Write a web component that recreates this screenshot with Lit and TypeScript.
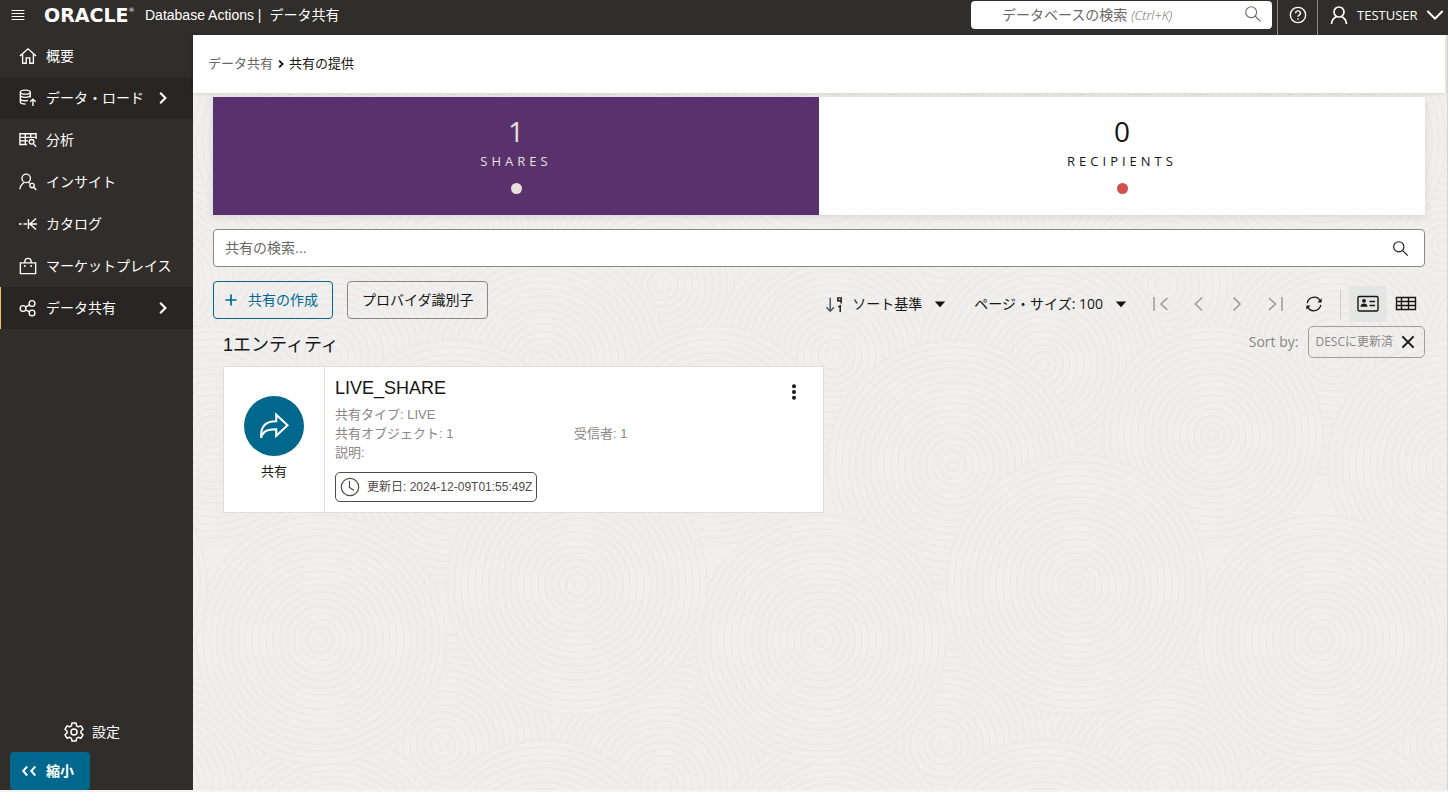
import { LitElement, html, svg, css, unsafeCSS } from "lit";
import { customElement, state } from "lit/decorators.js";

/* Background texture: overlapping discs of fine concentric rings. */
const DISCS: Array<[number, number, number]> = [
  [20, 190, 120], [250, 210, 110], [470, 250, 120], [140, 320, 120],
  [350, 330, 125], [20, 400, 110], [260, 430, 125], [128, 105, 125],
  [384, 50, 130],
];
const TILE = 500;

function textureUri(): string {
  let body = "";
  for (const [x, y, r] of DISCS) {
    for (const dx of [-TILE, 0, TILE]) {
      for (const dy of [-TILE, 0, TILE]) {
        const cx = x + dx;
        const cy = y + dy;
        if (cx + r < 0 || cx - r > TILE || cy + r < 0 || cy - r > TILE) continue;
        body += `<circle cx="${cx}" cy="${cy}" r="${r}" fill="#f0efed"/>`;
        for (let k = r; k > 3; k -= 7) {
          body += `<circle cx="${cx}" cy="${cy}" r="${k}" fill="none" stroke="#ecebe9" stroke-width="2"/>`;
        }
      }
    }
  }
  const doc = `<svg xmlns="http://www.w3.org/2000/svg" width="${TILE}" height="${TILE}"><rect width="100%" height="100%" fill="#f0efed"/>${body}</svg>`;
  return `url("data:image/svg+xml,${encodeURIComponent(doc)}")`;
}

const glyphs = {
  home: svg`<path d="M1 10 10 2l9 8M4 8v10h4v-6h4v6h4V8"/>`,
  load: svg`<ellipse cx="7" cy="3.5" rx="5.5" ry="2.2"/><path d="M1.500 3.500v11c0 1.300 2.500 2.300 6 2.300M12.500 3.500v6M1.500 7c0 1.300 2.500 2.300 5.500 2.300S12.500 8.300 12.500 7M1.500 10.800c0 1.300 2.500 2.200 5.500 2.200 1 0 2 0 3-.4M15.500 19v-7.500M12.500 14.200l3-3 3 3"/>`,
  analysis: svg`<path d="M9 15H1V3h18v6M1 7h18M1 11h9M7 3v12M13 3v4"/><circle cx="14" cy="12" r="2.600"/><path d="m16 14 3 3.500"/>`,
  insight: svg`<circle cx="8" cy="6" r="4.700"/><path d="M1 18c0-4 2-5.500 4.700-7.500M10.500 10.300l1.500 1.200"/><circle cx="14.500" cy="14" r="2.400"/><path d="m16.300 15.800 3 3"/>`,
  catalog: svg`<path d="M0 10h3M5 10h4M10.500 4.500v11M10.500 10H20M19 4 12 10l7 6"/>`,
  market: svg`<path d="M1.500 6.500h17v12h-17zM6.500 6.500V5a3.500 3.500 0 0 1 7 0v1.500"/><path d="M6.500 9v2M13.500 9v2"/>`,
  share: svg`<circle cx="4.500" cy="10.500" r="3.200"/><circle cx="14.500" cy="5" r="3.200"/><circle cx="14.500" cy="15.500" r="3.200"/><path d="m7.300 9 4.400-2.500M7.300 12l4.400 2.200"/>`,
  gear: svg`<circle cx="10" cy="10" r="3"/><path d="M8 1h4l.6 2.800 1.700 1 2.700-.9 2 3.400L16.900 9.200v1.700l2.100 1.900-2 3.400-2.700-.9-1.700 1L12 19H8l-.6-2.700-1.700-1-2.700.9-2-3.400 2.100-1.900V9.200L1 7.300l2-3.400 2.700.9 1.700-1z" stroke-linejoin="round"/>`,
  menu: svg`<path d="M2 4.500h16M2 8.200h16M2 12h16M2 15.700h16"/>`,
  search: svg`<circle cx="8" cy="8" r="6"/><path d="m12.500 12.500 6 6"/>`,
  help: svg`<circle cx="10" cy="10" r="8.500"/><path d="M7.300 8a2.700 2.500 0 1 1 4 2.100c-.9.500-1.300 1-1.300 1.900M10 13.500v1.700"/>`,
  user: svg`<circle cx="10" cy="7" r="5"/><path d="M2.500 19c.3-4 2-6 5-7.500M17.500 19c-.3-4-2-6-5-7.500"/>`,
  down: svg`<path d="m1.500 5.500 8.500 8.500 8.500-8.500"/>`,
  right: svg`<path d="m6.500 3.500 6.500 6.500-6.500 6.500"/>`,
  plus: svg`<path d="M10 2v16M2 10h16"/>`,
  sort: svg`<path d="M5.500 3v14M1.500 13l4 4 4-4" stroke="#47525c"/><path d="M17 9V3h-3.500v3H17M14 12.500l2-1V18"/>`,
  caret: svg`<path d="M3.500 7h13L10 14z" fill="currentColor" stroke="none"/>`,
  first: svg`<path d="M3 3v14M16.500 4l-6.500 6 6.500 6"/>`,
  prev: svg`<path d="M13 3.500 6.500 10l6.500 6.500"/>`,
  last: svg`<path d="M17 3v14M4 4l6.500 6L4 16"/>`,
  refresh: svg`<path d="M2.500 9A7.700 7.700 0 0 1 17 6.800M17.500 11A7.700 7.700 0 0 1 3 13.200"/><path d="M18.500 3.500v4.700h-4.700zM1.500 16.500v-4.700h4.700z" fill="currentColor" stroke="none"/>`,
  cards: svg`<rect x="1" y="2.500" width="20" height="14.500" rx="1.500"/><path d="M12.500 7.500H18M12.500 11.500H18"/><circle cx="7" cy="6.800" r="1.900" fill="currentColor" stroke="none"/><path d="M3.500 12.800c0-4.400 7-4.400 7 0z" fill="currentColor" stroke="none"/>`,
  table: svg`<path d="M1.500 3.500h19v12h-19zM1.500 7.500h19M1.500 11.500h19M6.500 3.500v12M13.500 3.500v12"/>`,
  close: svg`<path d="m3 3 14 14M17 3 3 17"/>`,
  dots: svg`<g fill="currentColor" stroke="none"><circle cx="10" cy="3.500" r="2.200"/><circle cx="10" cy="10" r="2.200"/><circle cx="10" cy="16.500" r="2.200"/></g>`,
  forward: svg`<path d="M1.500 17.500C1 10 4.500 6.800 11.500 6.800V2.500l7.500 7-7.500 7v-4.300c-5 0-6.500.5-8 2"/><path d="M1.500 18v-1.500l2.200-2.500"/>`,
  clock: svg`<circle cx="10" cy="10" r="8.700"/><path d="M9.500 4v6.500l4.500 3"/>`,
  collapse: svg`<path d="M8 5 3.500 10 8 15M17 5l-4.500 5 4.500 5"/>`,
};
type Glyph = keyof typeof glyphs;

function icon(name: Glyph, size = 20, weight = 1.5, box = "0 0 20 20") {
  return html`<svg class="icon" width=${size} height=${size} viewBox=${box} fill="none"
    stroke="currentColor" stroke-width=${weight} aria-hidden="true">${glyphs[name]}</svg>`;
}

interface NavItem { label: string; glyph: Glyph; shaded?: boolean; current?: boolean; }

const NAV: NavItem[] = [
  { label: "概要", glyph: "home" },
  { label: "データ・ロード", glyph: "load", shaded: true },
  { label: "分析", glyph: "analysis" },
  { label: "インサイト", glyph: "insight" },
  { label: "カタログ", glyph: "catalog" },
  { label: "マーケットプレイス", glyph: "market" },
  { label: "データ共有", glyph: "share", shaded: true, current: true },
];

@customElement("app-root")
export class AppRoot extends LitElement {
  @state() private tab = "shares";
  @state() private view = "cards";

  static styles = css`
    :host {
      display: flex;
      flex-direction: column;
      min-height: 100vh;
      box-sizing: border-box;
      padding-bottom: 2px;
      background: #f4f3f2;
      color: #161513;
      font: 14px/20px "Liberation Sans", "Noto Sans CJK JP", sans-serif;
    }
    *, *::before { box-sizing: border-box; }
    button, input { font: inherit; color: inherit; margin: 0; }
    button { background: none; border: 0; padding: 0; cursor: pointer; }
    a { color: inherit; text-decoration: none; }
    h1, h2, p, ul, ol, dl, dd { margin: 0; padding: 0; font: inherit; list-style: none; }
    .icon { display: block; flex: none; }

    .top { display: flex; align-items: flex-start; height: 35px; background: #312d2a; color: #fff; }
    .top-inner { display: flex; align-items: center; height: 30px; flex: 1; padding-left: 10px; }
    .brand { display: flex; align-items: center; margin-left: 18px; }
    .logo { display: flex; font: bold 19px/20px "DejaVu Sans", sans-serif; width: 101px; }
    .logo sup { font: 6px/10px "DejaVu Sans", sans-serif; }
    .product { display: flex; gap: 8px; }
    .finder { position: relative; width: 301px; height: 28px; margin-left: auto; color: #6b6764; }
    .finder input { width: 100%; height: 28px; border: 0; border-radius: 4px; background: #fff; padding: 0 40px 0 31px; color: #161513; }
    .finder-hint { position: absolute; inset: 4px auto auto 31px; pointer-events: none; }
    .finder-hint em { font: italic 13px/20px "Open Sans", "Noto Sans", sans-serif; font-weight: 300; }
    .finder-icon { position: absolute; inset: 4px 10px auto auto; }
    .top-cell { display: flex; align-items: center; height: 35px; border-left: 1px solid #8b8683; padding-bottom: 5px; }
    .help { width: 40px; justify-content: center; margin-left: 5px; }
    .account { width: 131px; padding-left: 11px; gap: 8px; font: 13px/20px "Open Sans", "Noto Sans", sans-serif; }

    .body { display: flex; flex: 1; }
    .side { display: flex; flex-direction: column; width: 193px; flex: none; background: #312d2a; color: #fff; }
    .nav { display: flex; flex-direction: column; }
    .nav-link { display: grid; grid-template-columns: 20px 1fr 18px; column-gap: 8px; align-items: center; justify-items: start; height: 42px; padding: 0 21px 0 17px; border-left: 1px solid transparent; white-space: nowrap; }
    .nav-link .icon { justify-self: center; }
    .shaded { background: #292522; }
    .current { border-left-color: #f1c05c; }
    .settings { display: flex; align-items: center; gap: 8px; margin: auto 0 10px 64px; }
    .collapse { display: flex; align-items: center; gap: 8px; width: 80px; height: 38px; margin-left: 10px; padding-left: 10px; border-radius: 4px; background: #00688c; font-weight: bold; }

    .main { flex: 1; min-width: 0; border-right: 1px solid #d6d4d2; background: #f0efed ${unsafeCSS(textureUri())}; }
    .crumbs { height: 58px; margin-right: 2px; padding: 19px 15px; background: #fff; box-shadow: 0 1px 4px #0000001f; font-size: 13px; }
    .crumbs ol { display: flex; align-items: center; }
    .crumb { color: #6b6764; }
    .crumb-here { display: flex; align-items: center; }
    .page { padding: 4px 22px 20px 20px; }

    .tiles { display: grid; grid-template-columns: 1fr 1fr; box-shadow: 0 2px 8px #0000001a; }
    .tile { display: flex; flex-direction: column; align-items: center; height: 118px; padding-top: 16px; background: #fff; font-family: "Open Sans", "Noto Sans", sans-serif; }
    .tile.on { background: #59316c; color: #e5e1dc; }
    .count { font-size: 28px; line-height: 36px; }
    .name { font-size: 13px; line-height: 24px; font-weight: 500; letter-spacing: 4px; }
    .dot { width: 11px; height: 11px; margin-top: 10px; border-radius: 50%; background: #d1514a; }
    .tile.on .dot { background: #e5e1dc; }

    .search { display: flex; align-items: center; height: 38px; margin-top: 14px; padding-right: 15px; border: 1px solid #8b8683; border-radius: 4px; background: #fff; }
    .search input { flex: 1; min-width: 0; border: 0; background: none; padding: 0 11px; outline: 0; }
    .search input::placeholder { color: #6b6764; opacity: 1; }

    .tools { display: flex; align-items: center; margin-top: 14px; height: 38px; }
    .btn { display: flex; align-items: center; justify-content: center; height: 38px; padding: 0 14px; border: 1px solid #8b8683; border-radius: 4px; }
    .primary { gap: 10px; padding-left: 10px; border-color: #00688c; color: #00688c; margin-right: 14px; }
    .controls { display: flex; align-items: center; margin-left: auto; padding-top: 8px; }
    .pick { display: flex; align-items: center; gap: 8px; margin-right: 26px; }
    .pick .icon:last-child { margin-left: 2px; }
    .size { margin-right: 22px; font-family: "Open Sans", "Noto Sans CJK JP", sans-serif; }
    .pager { display: flex; gap: 18px; color: #9a9794; margin-right: 20px; }
    .views { display: flex; margin-left: 17px; padding-left: 8px; border-left: 1px solid #d0cecc; height: 30px; align-items: center; }
    .view { display: flex; align-items: center; justify-content: center; width: 38px; height: 36px; border-radius: 3px; }
    .view.on { background: #e4e6e6; }

    .summary { display: flex; align-items: flex-end; justify-content: space-between; height: 32px; margin-top: 7px; padding-left: 10px; }
    .total { font-size: 18px; line-height: 26px; }
    .sorts { display: flex; align-items: center; gap: 10px; color: #8b8683; font-family: "Open Sans", "Noto Sans CJK JP", sans-serif; }
    .chip { display: flex; align-items: center; gap: 7px; height: 32px; padding: 0 8px 0 6px; border: 1px solid #a09d9a; border-radius: 5px; font-size: 12px; }
    .chip button { color: #161513; }

    .card { display: flex; width: 50%; max-width: 601px; height: 147px; margin: 8px 0 0 10px; border: 1px solid #e0dedc; background: #fff; }
    .kind { display: flex; flex-direction: column; align-items: center; justify-content: center; gap: 6px; width: 101px; flex: none; padding-bottom: 2px; border-right: 1px solid #e0dedc; font-size: 13px; }
    .disc { display: grid; place-items: center; width: 60px; height: 60px; border-radius: 50%; background: #00688c; color: #fff; }
    .info { flex: 1; padding: 9px 10px; min-width: 0; }
    .info-head { display: flex; justify-content: space-between; height: 29px; }
    .title { font-size: 18px; line-height: 24px; }
    .more { display: flex; align-items: center; width: 38px; height: 32px; justify-content: center; }
    .facts { display: grid; grid-template-columns: 1fr 1fr; font-size: 13px; line-height: 19px; color: #8b8683; }
    .wide { grid-column: 1 / -1; }
    .stamp { display: inline-flex; align-items: center; gap: 7px; height: 30px; margin-top: 10px; padding: 0 4px; border: 1px solid #4f4b48; border-radius: 5px; font-size: 12px; color: #4f4b48; white-space: nowrap; }
  `;

  render() {
    return html`
      <header class="top">
        <div class="top-inner">
          <button aria-label="メニュー">${icon("menu", 16, 1.3)}</button>
          <div class="brand">
            <span class="logo">ORACLE<sup>®</sup></span>
            <h1 class="product"><span>Database Actions |</span><span>データ共有</span></h1>
          </div>
          <div class="finder">
            <input type="search" aria-label="データベースの検索" />
            <span class="finder-hint" aria-hidden="true">データベースの検索 <em>(Ctrl+K)</em></span>
            <span class="finder-icon">${icon("search", 18, 1.2)}</span>
          </div>
        </div>
        <button class="top-cell help" aria-label="ヘルプ">${icon("help", 18, 1.5)}</button>
        <button class="top-cell account">${icon("user", 20, 1.7)}<span>TESTUSER</span>${icon("down", 18, 2.2)}</button>
      </header>
      <div class="body">
        <aside class="side">
          <nav class="nav">${NAV.map((item) => this.navLink(item))}</nav>
          <a class="settings" href="#settings">${icon("gear", 20, 1.5)}設定</a>
          <button class="collapse">${icon("collapse", 18, 2.2)}縮小</button>
        </aside>
        <main class="main">
          <nav class="crumbs" aria-label="階層">
            <ol>
              <li class="crumb"><a href="#share">データ共有</a></li>
              <li class="crumb-here">${icon("right", 16, 3.4, "-5 -5 30 30")}共有の提供</li>
            </ol>
          </nav>
          <div class="page">
            <div class="tiles">
              ${this.tile("shares", 1, "SHARES")}
              ${this.tile("recipients", 0, "RECIPIENTS")}
            </div>
            <div class="search">
              <input type="text" placeholder="共有の検索..." aria-label="共有の検索" />
              <button aria-label="検索">${icon("search", 17, 1.3)}</button>
            </div>
            <div class="tools">
              <button class="btn primary">${icon("plus", 14, 2.4)}共有の作成</button>
              <button class="btn">プロバイダ識別子</button>
              <div class="controls">
                <button class="pick" aria-haspopup="menu">${icon("sort", 19, 1.5)}ソート基準 ${icon("caret", 16)}</button>
                <button class="pick size" aria-haspopup="menu">ページ・サイズ: 100 ${icon("caret", 16)}</button>
                <div class="pager">
                  <button aria-label="最初のページ">${icon("first", 20, 1.5)}</button>
                  <button aria-label="前のページ">${icon("prev", 20, 1.5)}</button>
                  <button aria-label="次のページ">${icon("right", 20, 1.5)}</button>
                  <button aria-label="最後のページ">${icon("last", 20, 1.5)}</button>
                </div>
                <button aria-label="リフレッシュ">${icon("refresh", 18, 1.4)}</button>
                <div class="views">
                  ${this.viewButton("cards", "カード表示")}
                  ${this.viewButton("table", "表形式")}
                </div>
              </div>
            </div>
            <div class="summary">
              <h2 class="total">1エンティティ</h2>
              <div class="sorts">
                <span>Sort by:</span>
                <span class="chip">DESCに更新済<button aria-label="削除">${icon("close", 16, 2.4)}</button></span>
              </div>
            </div>
            <article class="card">
              <div class="kind"><span class="disc">${icon("forward", 30, 1.4)}</span>共有</div>
              <div class="info">
                <div class="info-head">
                  <h2 class="title">LIVE_SHARE</h2>
                  <button class="more" aria-label="アクション">${icon("dots", 18)}</button>
                </div>
                <div class="facts">
                  <p class="wide">共有タイプ: LIVE</p>
                  <p>共有オブジェクト: 1</p>
                  <p>受信者: 1</p>
                  <p class="wide">説明:</p>
                </div>
                <div class="stamp">${icon("clock", 20, 1.2)}更新日: 2024-12-09T01:55:49Z</div>
              </div>
            </article>
          </div>
        </main>
      </div>
    `;
  }

  private navLink(item: NavItem) {
    return html`<a href="#" class="nav-link ${item.shaded ? "shaded" : ""} ${item.current ? "current" : ""}">
      ${icon(item.glyph, 18, 1.5)}<span>${item.label}</span>${item.shaded ? icon("right", 16, 2.6) : ""}
    </a>`;
  }

  private tile(key: string, count: number, name: string) {
    return html`<button class="tile ${this.tab === key ? "on" : ""}" aria-pressed=${this.tab === key}
      @click=${() => (this.tab = key)}>
      <span class="count">${count}</span><span class="name">${name}</span><span class="dot"></span>
    </button>`;
  }

  private viewButton(key: "cards" | "table", label: string) {
    return html`<button class="view ${this.view === key ? "on" : ""}" aria-label=${label}
      @click=${() => (this.view = key)}>${icon(key, 22, 1.4, "0 -1 22 22")}</button>`;
  }
}
